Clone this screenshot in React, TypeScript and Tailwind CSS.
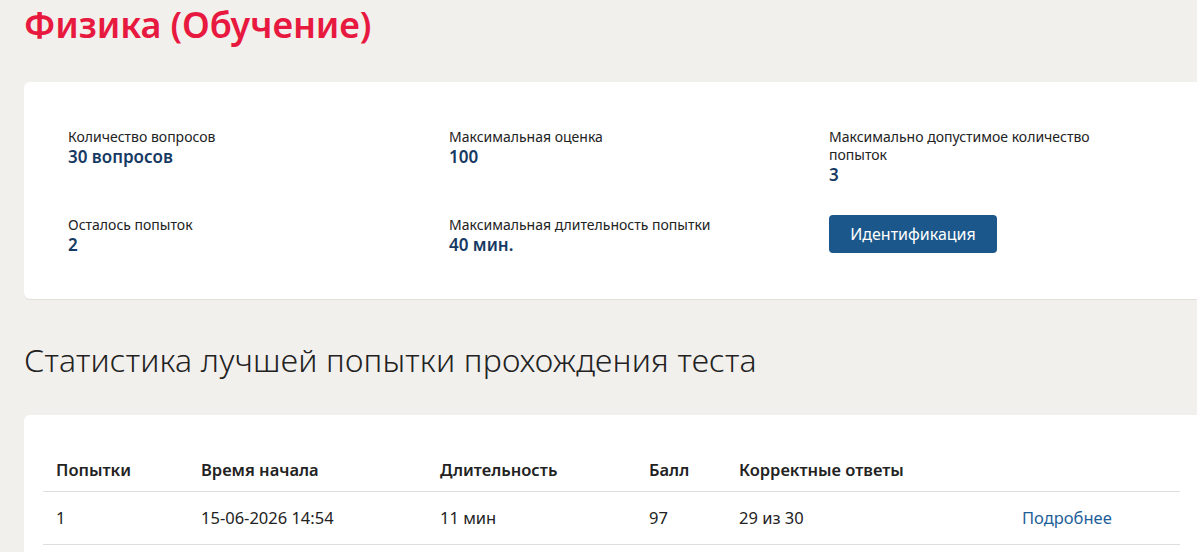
import React from "react";

const body = { fontFamily: '"Noto Sans", "Open Sans", sans-serif' };

function Info({ label, value, wrap }: { label: string; value: string; wrap?: boolean }) {
  return (
    <div className={wrap ? "max-w-[290px]" : ""}>
      <div className="text-[14px] leading-[18px] text-[#222]">{label}</div>
      <div className="text-[17px] leading-[22px] font-semibold text-[#163a63]">{value}</div>
    </div>
  );
}

export default function App() {
  return (
    <div className="min-h-screen bg-[#f2f0ed] overflow-hidden pl-6" style={body}>
      <h1 className="pt-[3px] text-[36px] leading-[44px] font-semibold tracking-[-0.1px] text-[#e8193f]">
        Физика (Обучение)
      </h1>

      <div className="mt-[35px] w-[1230px] rounded-md bg-white shadow-[0_1px_0_#e2ded8] pl-11 pt-[46px] pb-[43px]">
        <div className="grid grid-cols-[381px_380px_380px] gap-y-[30px]">
          <Info label="Количество вопросов" value="30 вопросов" />
          <Info label="Максимальная оценка" value="100" />
          <Info label="Максимально допустимое количество попыток" value="3" wrap />
          <Info label="Осталось попыток" value="2" />
          <Info label="Максимальная длительность попытки" value="40 мин." />
          <div>
            <button className="-mt-px h-[38px] w-[168px] rounded-[4px] bg-[#1b578b] text-white text-[16px] leading-none">
              Идентификация
            </button>
          </div>
        </div>
      </div>

      <h2 className="mt-[41px] text-[32px] leading-[40px] font-light tracking-[0.2px] text-[#222]">
        Статистика лучшей попытки прохождения теста
      </h2>

      <div className="mt-[35px] w-[1230px] rounded-md bg-white pl-[19px] pt-[35px] pb-6">
        <div className="w-[1137px] text-[16.5px] text-[#222]">
          <div className="grid grid-cols-[145px_239px_209px_90px_283px_1fr] h-[42px] items-center border-b border-[#dedede] font-semibold">
            <div className="pl-[13px]">Попытки</div>
            <div className="pl-[13px]">Время начала</div>
            <div className="pl-[13px]">Длительность</div>
            <div className="pl-[13px]">Балл</div>
            <div className="pl-[13px]">Корректные ответы</div>
            <div className="pl-[13px]"></div>
          </div>
          <div className="grid grid-cols-[145px_239px_209px_90px_283px_1fr] h-[53px] items-center border-b border-[#dedede]">
            <div className="pl-[13px]">1</div>
            <div className="pl-[13px]">15-06-2026 14:54</div>
            <div className="pl-[13px]">11 мин</div>
            <div className="pl-[13px]">97</div>
            <div className="pl-[13px]">29 из 30</div>
            <div className="pl-[13px] text-[#1f5f99]">Подробнее</div>
          </div>
        </div>
      </div>
    </div>
  );
}
